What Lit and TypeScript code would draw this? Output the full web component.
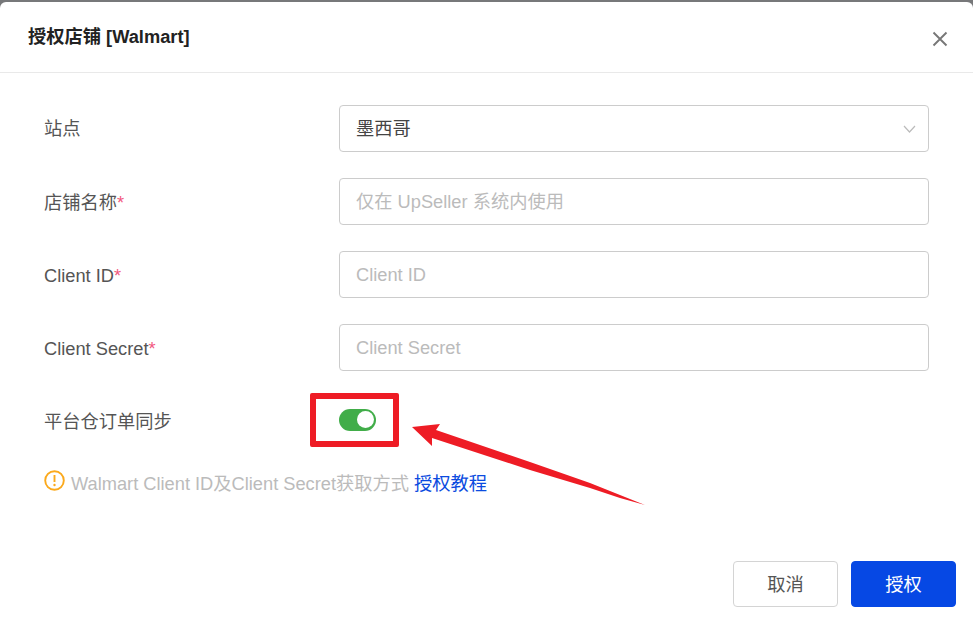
import { html, css, LitElement } from 'lit';
import { customElement } from 'lit/decorators.js';

const FIELDS = [
  { label: '店铺名称', labelClass: 'cjk-low', placeholder: '仅在 UpSeller 系统内使用', inputClass: 'cjk-text' },
  { label: 'Client ID', labelClass: 'latin', placeholder: 'Client ID', inputClass: '' },
  { label: 'Client Secret', labelClass: 'latin', placeholder: 'Client Secret', inputClass: '' },
];

@customElement('app-root')
export class AppRoot extends LitElement {
  static styles = css`
    :host {
      display: block;
      position: relative;
      width: 973px;
      height: 625px;
      overflow: hidden;
      background: #77787a;
      font-family: 'Liberation Sans', 'Noto Sans CJK SC', sans-serif;
      font-size: 18.25px;
      color: #555;
    }

    .dialog {
      box-sizing: border-box;
      height: 623px;
      margin-top: 2px;
      background: #fff;
      border-radius: 6px 6px 0 0;
      display: flex;
      flex-direction: column;
    }

    .header {
      box-sizing: border-box;
      height: 71px;
      flex: none;
      padding: 0 25px 0 28px;
      border-bottom: 1px solid #e9e9e9;
      display: flex;
      align-items: center;
      justify-content: space-between;
    }

    .title {
      font-weight: 700;
      color: #222;
      margin-top: -4px;
    }

    .close {
      display: block;
      margin-top: 3px;
    }

    .form {
      padding: 32px 44px 0;
      display: flex;
      flex-direction: column;
      gap: 26px;
    }

    .row {
      display: flex;
      align-items: center;
      height: 47px;
    }

    .label {
      width: 295px;
      flex: none;
    }

    .label.cjk {
      margin-top: -3px;
    }

    .label.cjk-low {
      margin-top: -1px;
    }

    .label.latin {
      margin-top: 3px;
    }

    .req {
      color: #f2587e;
    }

    .input {
      box-sizing: border-box;
      width: 590px;
      height: 47px;
      padding: 0 16px;
      border: 1px solid #ccc;
      border-radius: 4px;
      display: flex;
      align-items: center;
      justify-content: space-between;
      color: #bbb;
    }

    .cjk-text > span {
      margin-top: -4px;
    }

    .value {
      color: #444;
    }

    .chevron {
      margin: 1px -4px 0 0;
    }

    .switch {
      box-sizing: border-box;
      width: 37px;
      height: 22px;
      padding: 2.5px;
      border-radius: 11px;
      background: #41ad49;
      display: flex;
      justify-content: flex-end;
      margin-top: -2px;
    }

    .knob {
      width: 17px;
      height: 17px;
      border-radius: 50%;
      background: #fff;
    }

    .tip {
      margin-top: -1px;
      display: flex;
      align-items: center;
      gap: 6px;
      color: #bbb;
    }

    .tip svg {
      margin-top: -3px;
      flex: none;
    }

    .link {
      color: #0b4be0;
    }

    .footer {
      margin-top: auto;
      padding: 0 17px 18px 0;
      display: flex;
      justify-content: flex-end;
      gap: 13px;
    }

    .btn {
      box-sizing: border-box;
      width: 105px;
      height: 46px;
      padding-bottom: 2px;
      border-radius: 4px;
      border: 1.5px solid #d4d4d4;
      background: #fff;
      color: #555;
      display: flex;
      align-items: center;
      justify-content: center;
    }

    .primary {
      border-color: #0648e4;
      background: #0648e4;
      color: #fff;
    }

    /* red annotation drawn over the screenshot */
    .mark {
      position: absolute;
      left: 310px;
      top: 393px;
      box-sizing: border-box;
      width: 89px;
      height: 54px;
      border: 6px solid #ee1c25;
      border-radius: 2px;
    }

    .arrow {
      position: absolute;
      left: 0;
      top: 0;
      pointer-events: none;
    }
  `;

  render() {
    return html`
      <div class="dialog">
        <div class="header">
          <div class="title">授权店铺 [Walmart]</div>
          <svg class="close" width="16" height="16" viewBox="0 0 16 16">
            <path d="M1.5 1.5 14.5 14.5M14.5 1.5 1.5 14.5" stroke="#777" stroke-width="1.9" fill="none" />
          </svg>
        </div>
        <div class="form">
          <div class="row">
            <div class="label cjk">站点</div>
            <div class="input cjk-text">
              <span class="value">墨西哥</span>
              <svg class="chevron" width="13" height="8" viewBox="0 0 13 8">
                <path d="M1 1 6.5 7 12 1" stroke="#bbb" stroke-width="1.2" fill="none" />
              </svg>
            </div>
          </div>
          ${FIELDS.map(
            (f) => html`
              <div class="row">
                <div class="label ${f.labelClass}">${f.label}<span class="req">*</span></div>
                <div class="input ${f.inputClass}"><span>${f.placeholder}</span></div>
              </div>
            `
          )}
          <div class="row">
            <div class="label cjk-low">平台仓订单同步</div>
            <div class="switch"><div class="knob"></div></div>
          </div>
          <div class="tip">
            <svg width="21" height="21" viewBox="0 0 21 21">
              <circle cx="10.5" cy="10.5" r="9.3" stroke="#fba91c" stroke-width="1.9" fill="none" />
              <path d="M10.5 5v7" stroke="#fba91c" stroke-width="1.9" />
              <circle cx="10.5" cy="15" r="1.2" fill="#fba91c" />
            </svg>
            <span>Walmart Client ID及Client Secret获取方式 <span class="link">授权教程</span></span>
          </div>
        </div>
        <div class="footer">
          <div class="btn">取消</div>
          <div class="btn primary">授权</div>
        </div>
      </div>
      <div class="mark"></div>
      <svg class="arrow" width="973" height="625" viewBox="0 0 973 625">
        <polygon
          points="412,427 440,424 436,430 530,462 590,483 620,495 645,505 620,498 590,488 530,470 432,438 432,446"
          fill="#ee1c25"
        />
      </svg>
    `;
  }
}
